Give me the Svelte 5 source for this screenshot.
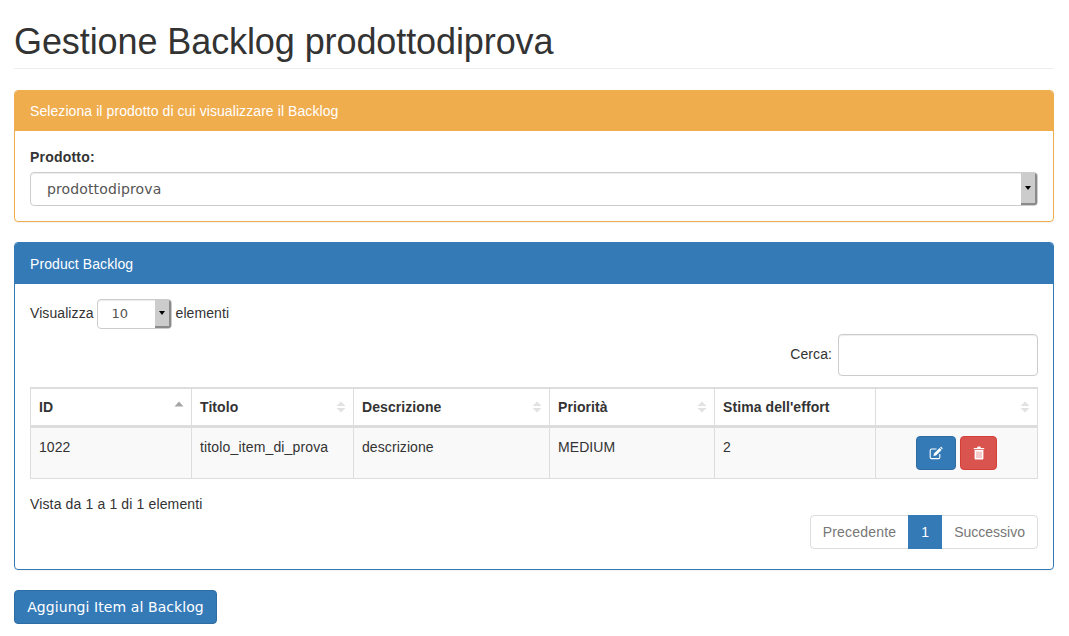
<script lang="ts">
  const columns = [
    { label: "ID", width: 161, sort: "asc" },
    { label: "Titolo", width: 162, sort: "both" },
    { label: "Descrizione", width: 196, sort: "both" },
    { label: "Priorità", width: 165, sort: "both" },
    { label: "Stima dell'effort", width: 161, sort: "none" },
    { label: "", width: 162, sort: "both" },
  ];

  const rows = [
    { id: 1022, titolo: "titolo_item_di_prova", descrizione: "descrizione", priorita: "MEDIUM", stima: 2 },
  ];
</script>

<div class="page">
  <h1>Gestione Backlog prodottodiprova</h1>

  <section class="panel warning">
    <div class="panel-heading">Seleziona il prodotto di cui visualizzare il Backlog</div>
    <div class="panel-body">
      <div class="label">Prodotto:</div>
      <div class="select big">
        <span class="value">prodottodiprova</span>
        <span class="arrow"><i></i></span>
      </div>
    </div>
  </section>

  <section class="panel primary">
    <div class="panel-heading">Product Backlog</div>
    <div class="panel-body">
      <div class="length">
        <span>Visualizza</span>
        <div class="select small">
          <span class="value">10</span>
          <span class="arrow"><i></i></span>
        </div>
        <span>elementi</span>
      </div>

      <div class="search">
        <span>Cerca:</span>
        <div class="input"></div>
      </div>

      <table>
        <colgroup>
          {#each columns as col}
            <col style="width: {col.width}px" />
          {/each}
        </colgroup>
        <thead>
          <tr>
            {#each columns as col}
              <th>
                {col.label}
                {#if col.sort === "asc"}
                  <svg class="sort" width="12" height="12" viewBox="0 0 12 12"><path d="M1.500 6.500 6 1.500l4.500 5z" fill="#a5a5a5" /></svg>
                {:else if col.sort === "both"}
                  <svg class="sort" width="12" height="14" viewBox="0 0 12 14"><path d="M1.500 6 6 1.500 10.500 6zM1.500 8 6 12.500 10.500 8z" fill="#e2e2e2" /></svg>
                {/if}
              </th>
            {/each}
          </tr>
        </thead>
        <tbody>
          {#each rows as row}
            <tr>
              <td>{row.id}</td>
              <td class="title">{row.titolo}</td>
              <td>{row.descrizione}</td>
              <td>{row.priorita}</td>
              <td>{row.stima}</td>
              <td class="actions">
                <div class="action-btns">
                  <button class="btn blue icon" type="button" aria-label="Modifica">
                    <svg width="14" height="14" viewBox="0 0 14 14">
                      <path d="M7.500 3H2.600C1.700 3 1.200 3.500 1.200 4.400v6.800c0 .9.500 1.400 1.400 1.400h6.800c.9 0 1.400-.5 1.400-1.400V8" fill="none" stroke="#fff" stroke-width="1.100" />
                      <path d="M5 7.600 10.600 2l2 2L7 9.600l-2.500.5z" fill="#fff" />
                      <path d="M11.100 1.400l.6-.5c.2-.2.5-.2.7 0l1.100 1.100c.2.2.2.5 0 .7l-.5.6z" fill="#fff" />
                    </svg>
                  </button>
                  <button class="btn red icon" type="button" aria-label="Elimina">
                    <svg width="12" height="14" viewBox="0 0 12 14">
                      <path d="M4 2 4.700.6h2.600L8 2h3.200v1.200H.8V2z" fill="#fff" />
                      <path fill-rule="evenodd" d="M1.600 4h8.800v8.400c0 .7-.4 1.100-1 1.100H2.600c-.6 0-1-.4-1-1.100zM3.700 5.400v6.600h.6V5.400zm2 0v6.600h.6V5.400zm2 0v6.600h.6V5.400z" fill="#fff" />
                    </svg>
                  </button>
                </div>
              </td>
            </tr>
          {/each}
        </tbody>
      </table>

      <div class="info">Vista da 1 a 1 di 1 elementi</div>

      <div class="pager">
        <nav class="pagination">
          <span class="page-link prev">Precedente</span>
          <span class="page-link active">1</span>
          <span class="page-link next">Successivo</span>
        </nav>
      </div>
    </div>
  </section>

  <button class="btn blue add" type="button">Aggiungi Item al Backlog</button>
</div>

<style>
  :global(body) {
    background: #fff;
  }

  .page {
    padding: 0 15px 12px 14px;
    font-family: "Liberation Sans", Arial, sans-serif;
    font-size: 14px;
    line-height: 20px;
    letter-spacing: 0.08px;
    color: #333;
  }

  h1 {
    margin: 0 0 21px;
    padding: 22px 0 2px;
    height: 44px;
    box-sizing: content-box;
    border-bottom: 1px solid #eee;
    font-size: 36px;
    font-weight: 500;
    line-height: 40px;
    letter-spacing: -0.09px;
  }

  .panel {
    border: 1px solid;
    border-radius: 4px;
    box-shadow: 0 1px 1px rgba(0, 0, 0, 0.05);
    margin-bottom: 20px;
  }

  .warning {
    border-color: #f0ad4e;
  }

  .primary {
    border-color: #337ab7;
  }

  .panel-heading {
    padding: 10px 15px;
    color: #fff;
    border-radius: 3px 3px 0 0;
  }

  .warning .panel-heading {
    background: #f0ad4e;
  }

  .primary .panel-heading {
    padding-top: 11px;
    background: #337ab7;
  }

  .panel-body {
    padding: 15px;
  }

  .warning .panel-body {
    padding-top: 16px;
  }

  .label {
    font-weight: 700;
    letter-spacing: 0.2px;
    margin-bottom: 5px;
  }

  .select {
    display: flex;
    box-sizing: border-box;
    background: #fff;
    border: 1px solid #ccc;
    border-radius: 4px;
    box-shadow: inset 0 1px 1px rgba(0, 0, 0, 0.075);
    overflow: hidden;
  }

  .select .value {
    flex: 1;
  }

  .big {
    height: 34px;
  }

  .big .value {
    padding-left: 16px;
    font-family: "DejaVu Sans", sans-serif;
    font-size: 14px;
    line-height: 33px;
    letter-spacing: 0.13px;
    color: #555;
  }

  .small {
    display: inline-flex;
    width: 75px;
    height: 30px;
    margin-left: -1px;
    vertical-align: middle;
  }

  .small .value {
    padding-left: 14px;
    font-family: "DejaVu Sans", sans-serif;
    font-size: 13px;
    line-height: 27px;
    letter-spacing: 0;
    color: #555;
  }

  .arrow {
    display: flex;
    align-items: center;
    justify-content: center;
    width: 14px;
    background: #ccc;
    border-right: 2px solid #8a8a8a;
    border-bottom: 2px solid #8a8a8a;
  }

  .arrow i {
    width: 0;
    height: 0;
    border: 3.500px solid transparent;
    border-top: 4px solid #000;
    border-bottom: 0;
  }

  .length {
    height: 30px;
    line-height: 28px;
  }

  .search {
    display: flex;
    justify-content: flex-end;
    gap: 6px;
    margin-top: 5px;
    margin-bottom: 11px;
  }

  .search span {
    padding-top: 10px;
  }

  .input {
    box-sizing: border-box;
    width: 200px;
    height: 42px;
    border: 1px solid #ccc;
    border-radius: 4px;
    box-shadow: inset 0 1px 1px rgba(0, 0, 0, 0.075);
  }

  table {
    width: 1007px;
    table-layout: fixed;
    border-collapse: separate;
    border-spacing: 0;
    border-top: 2px solid #ddd;
    border-left: 1px solid #ddd;
  }

  th,
  td {
    position: relative;
    border-right: 1px solid #ddd;
    border-bottom: 1px solid #ddd;
    padding: 8px;
    text-align: left;
    vertical-align: top;
  }

  th {
    height: 20px;
    padding: 8px 8px 8px;
    font-weight: 700;
    border-bottom-width: 3px;
  }

  td {
    background: #f9f9f9;
    height: 33px;
    padding-top: 9px;
    padding-bottom: 7px;
  }

  td.actions {
    padding-top: 8px;
    padding-bottom: 8px;
  }

  td.title {
    letter-spacing: 0.15px;
  }

  .sort {
    position: absolute;
    top: 11px;
    right: 6.500px;
  }

  .action-btns {
    display: flex;
    justify-content: center;
    gap: 4px;
  }

  .btn {
    box-sizing: border-box;
    border: 1px solid;
    border-radius: 4px;
    color: #fff;
    padding: 0;
    font-family: "DejaVu Sans", sans-serif;
    font-size: 14px;
    letter-spacing: 0.08px;
  }

  .blue {
    background: #337ab7;
    border-color: #2e6da4;
  }

  .red {
    background: #d9534f;
    border-color: #d43f3a;
  }

  .icon {
    display: inline-flex;
    align-items: center;
    justify-content: center;
    width: 40px;
    height: 34px;
  }

  .icon.red {
    width: 37px;
  }

  .info {
    padding-top: 15px;
    height: 20px;
    letter-spacing: 0.14px;
  }

  .pager {
    display: flex;
    justify-content: flex-end;
    margin-top: 1px;
    margin-bottom: 5px;
  }

  .pagination {
    display: flex;
    box-sizing: border-box;
    height: 34px;
    border: 1px solid #ddd;
    border-radius: 4px;
  }

  .page-link {
    padding: 6px 12px;
    color: #777;
    line-height: 20px;
  }

  .prev {
    letter-spacing: 0.2px;
  }

  .next {
    letter-spacing: 0;
  }

  .active {
    background: #337ab7;
    color: #fff;
    margin: -1px 0;
    padding: 7px 13px;
  }

  .add {
    display: block;
    height: 34px;
    width: 203px;
  }
</style>
